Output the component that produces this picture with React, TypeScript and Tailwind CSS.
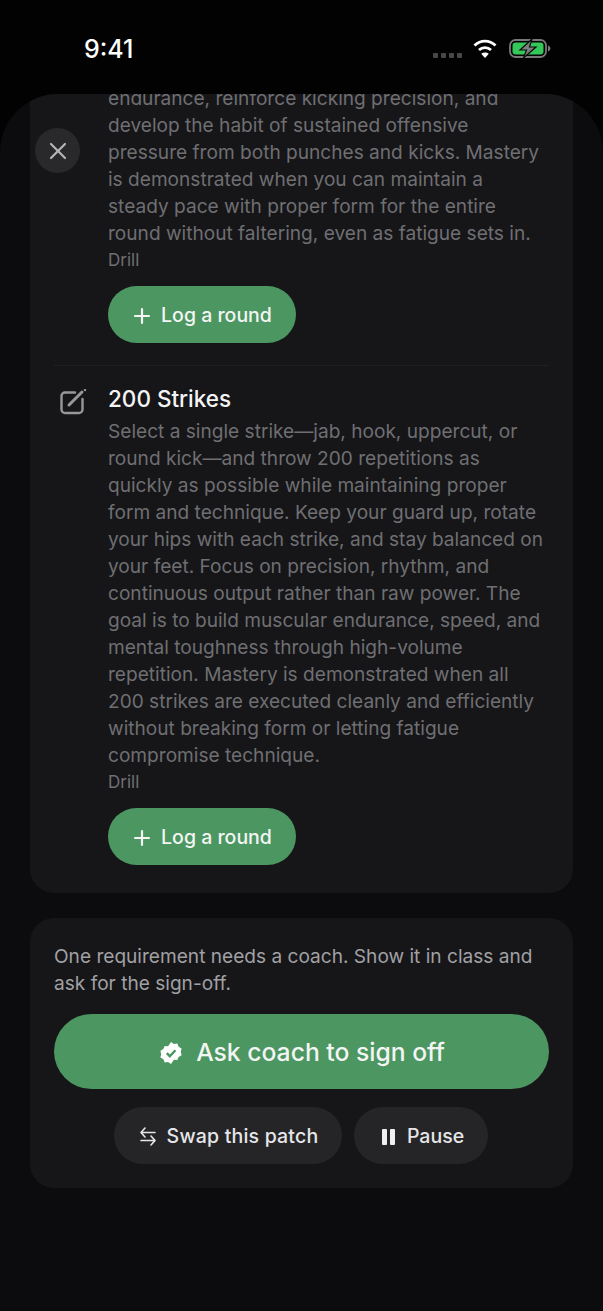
import React from "react";
import { Plus, X } from "lucide-react";

const drills = [
  {
    name: "",
    lines: [
      "endurance, reinforce kicking precision, and",
      "develop the habit of sustained offensive",
      "pressure from both punches and kicks. Mastery",
      "is demonstrated when you can maintain a",
      "steady pace with proper form for the entire",
      "round without faltering, even as fatigue sets in.",
    ],
  },
  {
    name: "200 Strikes",
    lines: [
      "Select a single strike—jab, hook, uppercut, or",
      "round kick—and throw 200 repetitions as",
      "quickly as possible while maintaining proper",
      "form and technique. Keep your guard up, rotate",
      "your hips with each strike, and stay balanced on",
      "your feet. Focus on precision, rhythm, and",
      "continuous output rather than raw power. The",
      "goal is to build muscular endurance, speed, and",
      "mental toughness through high-volume",
      "repetition. Mastery is demonstrated when all",
      "200 strikes are executed cleanly and efficiently",
      "without breaking form or letting fatigue",
      "compromise technique.",
    ],
  },
];

const LogButton = () => (
  <button className="mt-[14px] flex h-[57px] w-[188px] items-center justify-center gap-[7px] rounded-full bg-[#4c9661] pr-[2px] pt-[2px] text-[19.5px] font-medium text-[#f2f5f3]">
    <Plus size={24} strokeWidth={2.2} />
    Log a round
  </button>
);

const App = () => {
  return (
    <div className="flex h-[1311px] w-[603px] flex-col overflow-hidden bg-[#020203] font-['Inter',sans-serif]">
      {/* status bar */}
      <div className="flex h-[94px] shrink-0 items-start justify-between pl-[84px] pr-[52px] pt-[33px]">
        <span className="text-[25px] font-medium leading-[32px] text-white">9:41</span>
        <div className="flex items-start pt-[6px]">
          <div className="mr-[11px] mt-[14px] flex gap-[3px]">
            <span className="h-[5px] w-[5px] rounded-[1px] bg-[#48484a]" />
            <span className="h-[5px] w-[5px] rounded-[1px] bg-[#48484a]" />
            <span className="h-[5px] w-[5px] rounded-[1px] bg-[#48484a]" />
            <span className="h-[5px] w-[5px] rounded-[1px] bg-[#48484a]" />
          </div>
          <svg width="24" height="19" viewBox="0 0 24 19" fill="none" stroke="white" strokeWidth="2.8" className="mr-[12px]">
            <path d="M1.5 6.6C7.5 .6 16.5 .6 22.5 6.6" />
            <path d="M6 11C9.4 7.8 14.6 7.8 18 11" />
            <path d="M12 19 8.2 14.8C10.4 13 13.6 13 15.8 14.8Z" fill="white" stroke="none" />
          </svg>
          <svg width="42" height="19" viewBox="0 0 42 19" fill="none">
            <rect x="1" y="1" width="36" height="17" rx="5.5" stroke="#77787a" strokeWidth="1.8" />
            <rect x="3.5" y="3.5" width="31" height="12" rx="3.2" fill="#34c759" />
            <path d="M39 6.5v6c1.4-.4 2.4-1.6 2.4-3s-1-2.6-2.4-3Z" fill="#77787a" />
            <path d="M23 0 11 11h6.5L14.5 19 27 8h-6.5Z" fill="#7c7d7f" stroke="#0a0a0a" strokeWidth="1.2" />
          </svg>
        </div>
      </div>

      {/* sheet */}
      <div className="relative flex flex-1 flex-col overflow-hidden rounded-t-[58px] bg-[#0c0c0e] px-[30px]">
        <button className="absolute left-[35px] top-[34px] flex h-[45px] w-[45px] items-center justify-center rounded-full bg-[#29292c] text-[#b4b4b7]">
          <X size={28} strokeWidth={1.9} />
        </button>

        <div className="flex h-[799px] shrink-0 flex-col justify-end overflow-hidden rounded-b-[24px] bg-[#161618] px-[24px] pb-[28px]">
          {drills.map((drill, i) => (
            <div key={i} className={i > 0 ? "mt-[22px] border-t border-[#1f1f22] pt-[14px]" : ""}>
              <div className="flex">
                <div className="w-[54px] shrink-0 pt-[9px]">
                  {drill.name && (
                    <svg width="27" height="26" viewBox="0 0 27 26" fill="none" stroke="#98989b" strokeWidth="2.4" strokeLinecap="round" className="ml-[6px]">
                      <path d="M15 3.5H5a3.5 3.5 0 0 0-3.5 3.5v13.5a3.5 3.5 0 0 0 3.5 3.5h14a3.5 3.5 0 0 0 3.5-3.5V10" />
                      <path d="M9 16 22 3" strokeWidth="3" />
                      <path d="M25 1v.1" />
                    </svg>
                  )}
                </div>
                <div>
                  {drill.name && (
                    <h3 className="text-[22.5px] font-medium leading-[38px] text-[#f4f4f5]">{drill.name}</h3>
                  )}
                  <p className="whitespace-nowrap text-[19.1px] leading-[27px] text-[#6f6f73]">
                    {drill.lines.map((line) => (
                      <span key={line} className="block">
                        {line}
                      </span>
                    ))}
                  </p>
                  <p className="mt-[1px] text-[17px] leading-[24px] text-[#6f6f73]">Drill</p>
                  <LogButton />
                </div>
              </div>
            </div>
          ))}
        </div>

        <div className="mt-[25px] flex h-[270px] shrink-0 flex-col rounded-[24px] bg-[#161618] px-[24px] pt-[25px]">
          <p className="text-[19.1px] leading-[27px] text-[#a1a1a5]">
            One requirement needs a coach. Show it in class and ask for the sign-off.
          </p>
          <button className="mt-[17px] flex h-[75px] shrink-0 items-center justify-center gap-[14px] rounded-full bg-[#4c9661] pl-[2px] pt-[2px] text-[24.7px] font-medium text-[#f2f5f3]">
            <svg width="22" height="22" viewBox="0 0 22 22">
              <path
                fill="white"
                d="M11 0l2.9 1.9 3.4-.4 1.3 3.2 3 1.7-.8 3.4.8 3.4-3 1.7-1.3 3.2-3.4-.4L11 22l-2.9-1.9-3.4.4-1.3-3.2-3-1.7.8-3.4-.8-3.4 3-1.7 1.3-3.2 3.4.4Z"
              />
              <path d="M6.8 11.2l3 3 5.6-6" fill="none" stroke="#4c9661" strokeWidth="2.4" />
            </svg>
            Ask coach to sign off
          </button>
          <div className="mt-[18px] flex justify-center gap-[12px] pr-[1px]">
            <button className="flex h-[57px] w-[228px] items-center justify-center gap-[11px] rounded-full bg-[#252528] pl-[2px] pt-[2px] text-[19.5px] font-medium tracking-[0.2px] text-[#e6e6e8]">
              <svg width="16" height="19" viewBox="0 0 16 19" fill="none" stroke="#e6e6e8" strokeWidth="1.6" strokeLinecap="round" strokeLinejoin="round">
                <path d="M15 5.5H1M5 1 1 5.5 5 10" />
                <path d="M1 13.5H15M11 9l4 4.5-4 4.5" />
              </svg>
              Swap this patch
            </button>
            <button className="flex h-[57px] w-[134px] items-center justify-center gap-[12px] rounded-full bg-[#252528] pl-[4px] pt-[2px] text-[19.5px] font-medium text-[#e6e6e8]">
              <svg width="13" height="16" viewBox="0 0 13 16" fill="#f0f0f2">
                <rect x="0" y="0" width="5" height="16" rx="1" />
                <rect x="8" y="0" width="5" height="16" rx="1" />
              </svg>
              Pause
            </button>
          </div>
        </div>
      </div>
    </div>
  );
};

export default App;
